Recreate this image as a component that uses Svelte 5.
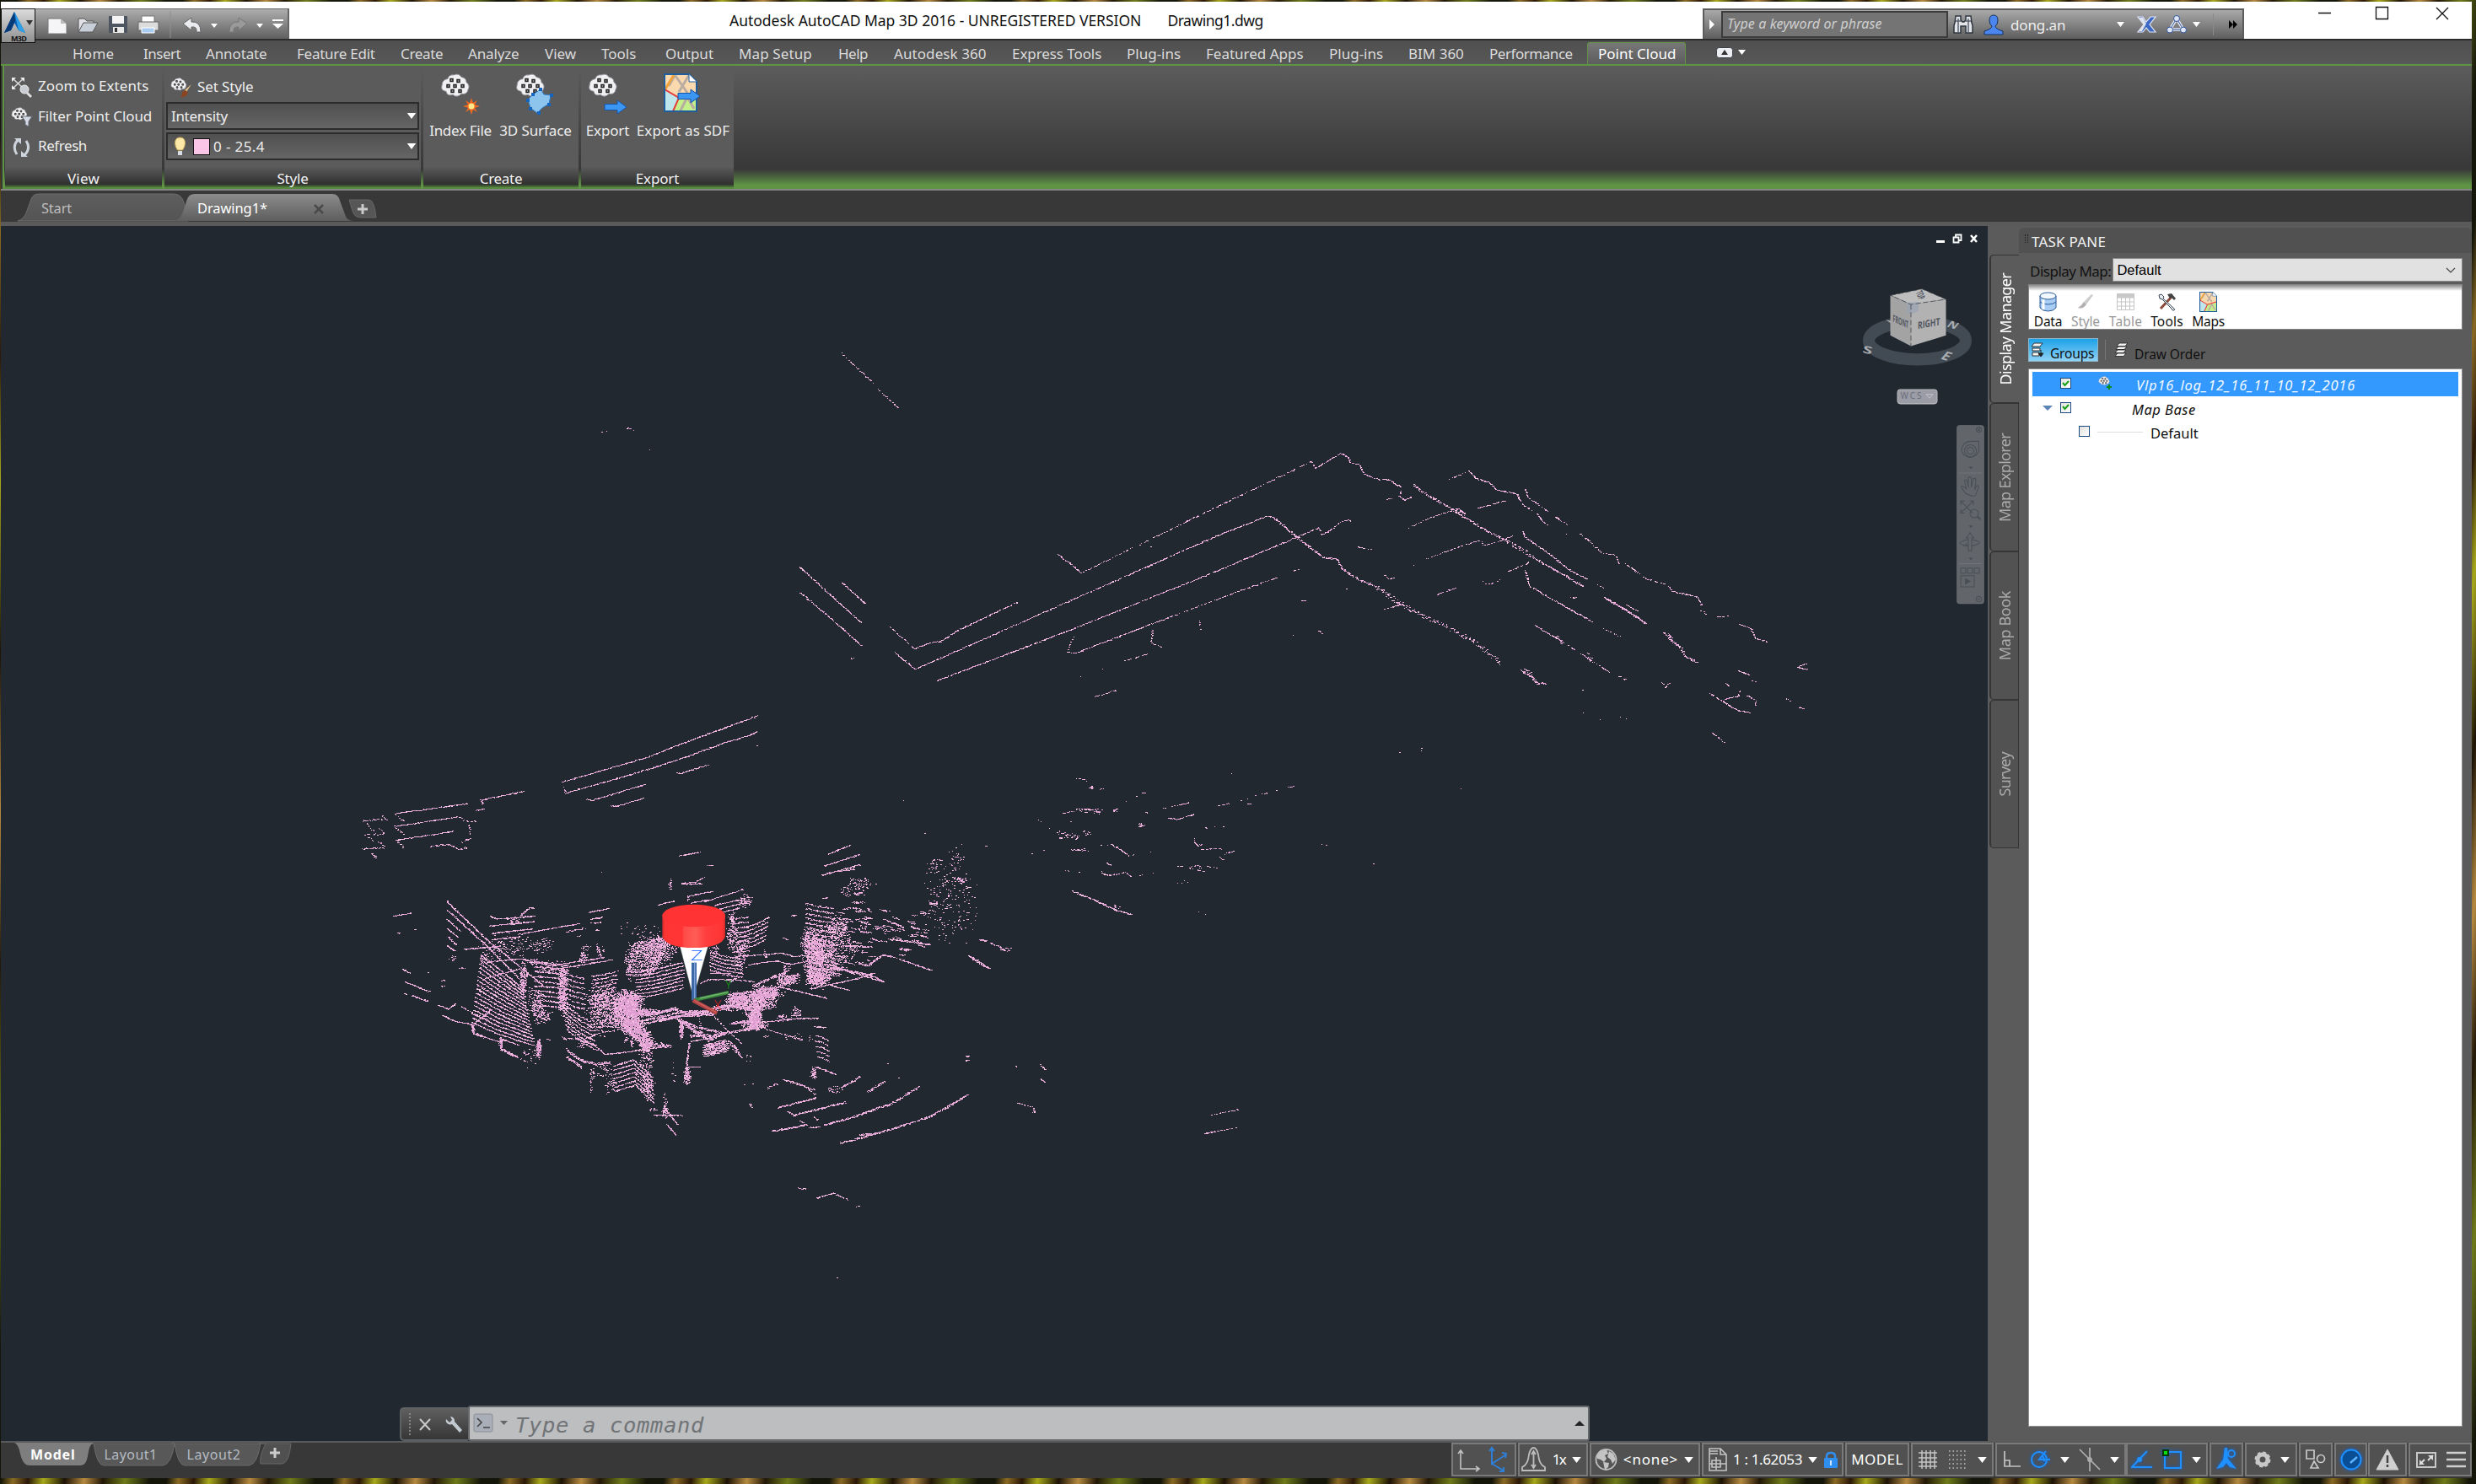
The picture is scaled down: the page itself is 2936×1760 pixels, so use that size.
<script>
  // Spreads a label over a known width by adjusting its tracking.
  function fit(node, width) {
    const vertical = getComputedStyle(node).writingMode.startsWith('vertical');
    const box = vertical ? node.offsetHeight : node.offsetWidth;
    node.style.letterSpacing = `${(width - box) / node.textContent.length}px`;
  }

  // Tab label, gap before it, width.
  const ribbonTabs = [
    ['Home', 0, 49], ['Insert', 35, 44], ['Annotate', 30, 73], ['Feature Edit', 35, 93], ['Create', 30, 50],
    ['Analyze', 30, 61], ['View', 30, 37], ['Tools', 30, 41], ['Output', 35, 57], ['Map Setup', 30, 87],
    ['Help', 31, 35], ['Autodesk 360', 31, 110], ['Express Tools', 30, 106], ['Plug-ins', 30, 64],
    ['Featured Apps', 30, 116], ['Plug-ins', 30, 64], ['BIM 360', 30, 66], ['Performance', 30, 99]
  ];
  const sideTabs = [['Display Manager', 132], ['Map Explorer', 105], ['Map Book', 82], ['Survey', 53]];

  // ---- Point cloud -------------------------------------------------------
  let seed = 20161210;
  function rnd() {
    seed = (seed + 0x6d2b79f5) | 0;
    let t = Math.imul(seed ^ (seed >>> 15), 1 | seed);
    t = (t + Math.imul(t ^ (t >>> 7), 61 | t)) ^ t;
    return ((t ^ (t >>> 14)) >>> 0) / 4294967296;
  }
  const shades = ['', '', ''];
  function put(x, y) {
    const w = rnd() < 0.45 ? 2 : 1;
    shades[Math.floor(rnd() * 3)] += `M${Math.round(x)} ${Math.round(y)}h${w}v1h-${w}z`;
  }
  // Local frames of the scan sections: origin and scale inside the viewport.
  const frames = {
    A: [399, 552, 0.574, 0.4464],
    B: [899, 112, 0.829, 0.3333],
    C: [459, 772, 0.3333, 0.3333],
    D: [779, 732, 0.3333, 0.3333],
    E: [1079, 592, 0.3333, 0.3333]
  };
  // Sections close to the scanner return more points per unit of length.
  const gain = { A: 1.15, B: 1.1, C: 1.35, D: 1.3, E: 1 };
  function line(f, density, jitter, pts, dx = 0, dy = 0) {
    const [ox, oy, sx, sy] = frames[f];
    const p = pts.split(' ').map((s) => s.split(',').map(Number));
    for (let i = 0; i < p.length; i++) {
      const a = p[i];
      const b = p[i + 1] ?? a;
      const x0 = ox + (a[0] + dx) * sx, y0 = oy + (a[1] + dy) * sy;
      const x1 = ox + (b[0] + dx) * sx, y1 = oy + (b[1] + dy) * sy;
      const n = Math.max(1, Math.round(Math.hypot(x1 - x0, y1 - y0) * gain[f]));
      if (b === a) { if (p.length === 1) put(x0, y0); continue; }
      for (let k = 0; k < n; k++) {
        for (let d = density; d > 0; d -= 1) {
          if (rnd() > d) continue;
          put(x0 + ((x1 - x0) * k) / n + (rnd() - 0.5) * jitter, y0 + ((y1 - y0) * k) / n + (rnd() - 0.5) * jitter);
        }
      }
    }
  }
  function lines(f, density, jitter, list) {
    for (const pts of list.split(';')) line(f, density, jitter, pts.trim());
  }
  function family(f, density, jitter, n, dx, dy, pts) {
    for (let i = 0; i < n; i++) line(f, density, jitter, pts, dx * i, dy * i);
  }
  // Soft-edged scatter of short returns.
  function blob(f, cx, cy, rx, ry, n) {
    const [ox, oy, sx, sy] = frames[f];
    for (let i = 0; i < n; i++) {
      const a = rnd() * 6.283, r = (rnd() + rnd() * 0.75) * 0.8;
      put(ox + (cx + Math.cos(a) * r * rx) * sx, oy + (cy + Math.sin(a) * r * ry) * sy);
    }
  }
  function dashes(f, cx, cy, rx, ry, n, len, slope = 0.15) {
    for (let i = 0; i < n; i++) {
      const x = cx + (rnd() * 2 - 1) * rx, y = cy + (rnd() * 2 - 1) * ry, l = len * (0.4 + rnd());
      line(f, 0.75, 1.4, `${x},${y} ${x + l},${y + l * slope}`);
    }
  }

  lines('B', 0.5, 0.8, '116,112 164,225;168,240 204,323;460,898 620,703 790,500;790,500 795,525 812,500 832,472;984,566 1015,535;1095,600 1100,630 1140,700 1180,770 1205,825 1225,835 1230,868;1238,865 1270,920 1300,940 1305,962;1345,1030 1358,1048;1370,1055 1387,1050;1195,935 1210,955;1207,1095 1232,1125;1150,1145 1187,1205 1217,1252;1230,1265 1243,1282;187,1090 205,1130 222,1168;440,1180 446,1140 451,1122;522,1210 560,1182;925,742 960,700 1000,668;1028,667 1067,640;893,1027 920,1007;970,973 1000,947;1035,925 1040,940 1060,922;893,905 900,918 908,915;773,1000 782,995;630,1070 630,1100;480,1338 512,1313;764,890 772,884;1240,1010 1257,1035;1362,1467 1382,1502;1178,1390 1181,1402;1160,985 1170,985;856,805 875,814;1358,1325 1375,1350;1420,1282 1432,1290;1468,1345 1475,1355;742,912 650,995 560,1080;820,740 830,718 842,708 847,715;800,1105 807,1115;1203,1420;764,1120;1232,1410;1240,1417;1177,1315;560,805;840,955;936,871;1155,760;460,1265;491,1238;915,1537;947,1521;131,1200;135,1200;131,1204;1100,860 1065,900');
  lines('B', 0.42, 0.8, '953,848 1000,805 1032,780 1035,800 1060,783 1080,762');
  lines('B', 0.85, 0.9, '427,832 445,865 460,898;832,472 842,485 845,505 858,513 865,545 885,565 903,566 908,580 918,592;918,605 915,625 922,637 933,628;897,636 906,632;1015,535 1025,562 1043,575 1055,603 1083,615 1090,650 1105,675;1112,685 1120,715 1130,730;1305,962 1342,983 1348,1015;1402,1080 1418,1095 1425,1130 1442,1143;1092,748 1095,770 1130,830 1160,890 1185,920;1208,985 1240,1030 1268,1078;1095,890 1098,915 1102,945 1130,985 1165,1035 1192,1072;1110,1085 1150,1145;57,875 147,1078;118,932 152,1008;58,967 100,1055 147,1158;222,1168 240,1148 260,1140 285,1100 370,1000;194,1180 210,1215 223,1240 450,990 650,770 728,693;255,1280 450,1095 650,895 800,737 805,762 820,740;440,1180 452,1183 560,1080;562,1103 560,1145 575,1162;1400,1245 1418,1262;1383,1290 1388,1303;1375,1350 1400,1388 1418,1394;1375,1350 1400,1335 1403,1315;1413,1335 1425,1350 1425,1372;1485,1232 1497,1220;1487,1235 1500,1242;1290,1285 1296,1303 1302,1290;1487,1375 1495,1382;1000,668 1010,690');
  lines('B', 1.3, 2, '936,584 950,612 993,675 1035,740 1070,785;1105,840 1140,890 1178,945;1293,1108 1303,1135 1318,1165 1325,1195 1342,1218;728,693 742,712 768,770 808,845 825,848 835,885 860,925 885,950;1090,1245 1105,1270 1112,1290 1125,1292;1300,1110 1306,1140;1208,985 1240,1030 1268,1078');
  lines('B', 1, 4.5, '1070,785 1105,840;885,950 915,1005 945,1045 980,1085 1020,1140 1045,1185 1060,1220;1140,1125 1150,1145;993,670 1010,690;1185,1185 1190,1210;1095,1240 1105,1265');

  lines('A', 1, 1, '464,240 640,174 700,143 790,100 868,64;470,270 600,222 700,182 800,135 850,116;850,116 868,105;515,285 525,289 635,246;565,303 578,304 633,282;700,215 710,216 767,194;118,324 268,297;295,288 387,264;285,316 305,310;297,288 300,300;118,358 250,332;120,394 240,371');
  lines('A', 0.65, 1.6, '250,332 268,345 293,345;268,345 275,380;190,411 230,406 250,420 265,415 255,398 277,390;50,343 100,338;92,328 102,345;55,380 100,378;52,417 100,415;118,358 137,380;120,395 137,415;70,430 82,443;60,350 75,372;85,362 95,376;62,385 75,395;85,400 100,412;118,324 137,345;466,255 472,270');
  lines('A', 1.7, 1.8, '910,1105 990,1078;942,1125 1050,1090;1005,1151 1060,1132 1130,1100 1140,1098 1202,1048;1095,1063 1133,1033;1040,1052 1080,1022;1037,1200 1080,1185 1150,1160 1220,1130 1260,1103 1304,1068;897,1168 970,1150;1078,1178 1120,1172');
  lines('A', 0.9, 1.2, '930,1115 945,1128;887,1053 910,1040;920,1030 985,1058;975,1158 998,1155;985,1130 996,1145;955,1140 965,1150;1436,1118 1442,1115;1452,992 1464,1006;1452,1028 1461,1040;1298,968 1304,970;1298,980 1304,980;850,1095 857,1105;950,1319 970,1321;988,1346 1025,1332 1055,1352;1070,1367 1078,1367;1400,995 1405,996;1437,1105 1440,1120');
  lines('A', 0.55, 1, '1403,1092 1440,1105;545,-691 560,-693;590,-700 608,-699;612,-694;645,-643 650,-640;1789,1174 1857,1158;1801,1125 1864,1109;1789,1174 1815,1168;865,143;1169,290;1212,377;1031,1557;545,480;1340,410;1290,405;2238,157;2320,257;2139,457');

  // Left wall and the rows behind it.
  lines('C', 1.2, 1, '208,86 345,218 555,390;210,118 345,240 490,385;208,150 258,193;210,183 248,215;212,212 245,243;208,243 238,265;363,140 385,149 520,138;362,173 520,158;370,200 512,183;463,203 680,165;270,257 400,245;370,222 470,212;470,135 505,107 522,112;715,125 787,110;720,150 760,142;18,138 85,127;60,373 140,405;85,422 142,442;50,327 80,343;178,455 215,470 240,447;190,490 230,510 300,525 302,555 400,588 402,612 440,632 460,640;300,525 370,468;400,575 465,597;345,360 470,325;570,330 700,310 800,293;360,300 470,290 580,315 770,285;670,575 735,600 770,630 830,625 920,612 1000,598;620,568 633,580;1040,515 1045,565;905,610 960,590;990,880 1025,918;945,847 1045,847;980,820 1030,880;1060,675 1110,675');
  lines('C', 0.6, 1.2, '1070,590 1062,670;33,199 43,199;92,186 98,187;720,165 760,160;720,192 750,186;630,195 705,180;670,210 690,208;190,367 205,367;190,388 203,388;57,412 70,417;142,340;260,460 300,485 360,510;720,690 720,770;250,323 275,323;640,575 700,572 760,552 810,545;140,405 152,405;560,577 575,577;740,240 758,285');
  lines('C', 1.8, 2.6, '880,490 950,485 1020,465;880,527 980,505 1060,490 1200,458;1020,500 1100,535 1200,555;885,515 1040,480 1130,475;632,612 690,655 740,665 790,660;635,640 690,678;1050,515 1140,580 1200,555;850,570 842,585;865,580 868,605;535,580 530,635;300,525 302,555 345,570;400,575 402,612 440,632 460,640');
  for (let i = 0; i < 17; i++) line('C', 1.2, 1, `${330 - i * 2},${277 + i * 15} ${400 - i},${332 + i * 14} ${482 + i * 2.4},${400 + i * 12.5}`);
  family('C', 1.1, 1.5, 10, 0, 17, '520,302 570,305 640,315');
  family('C', 0.9, 1.8, 7, 0, 18, '610,330 650,350 700,362');
  family('C', 0.95, 1.6, 9, -1, 14, '725,352 770,345 815,334');
  family('C', 1.1, 1.2, 8, 0, 13, '880,338 950,328 1050,303');
  family('C', 1, 1.4, 7, 4, 17, '612,440 640,465 680,495 720,515');
  family('C', 1.1, 1.2, 7, 1, 15, '800,672 872,650 905,680 940,715');
  family('C', 0.7, 2, 10, 0, 12, '720,430 770,420 820,425');
  family('C', 0.9, 1.5, 6, 0, 8, '1120,598 1200,580');
  family('C', 0.7, 2.4, 6, 0, 16, '500,390 530,410 556,425');
  blob('C', 480, 360, 10, 60, 170); blob('C', 620, 400, 14, 75, 280); blob('C', 530, 470, 16, 50, 80);
  blob('C', 535, 610, 8, 30, 110); blob('C', 445, 152, 18, 14, 30); blob('C', 545, 240, 45, 28, 60);
  blob('C', 692, 285, 12, 22, 60); blob('C', 705, 250, 14, 10, 20); blob('C', 755, 265, 12, 26, 16);
  blob('C', 430, 245, 85, 34, 120); blob('C', 345, 290, 22, 20, 40); blob('C', 525, 300, 30, 10, 40);
  dashes('C', 860, 430, 35, 12, 12, 24, -0.1);
  blob('C', 852, 445, 42, 36, 950); blob('C', 845, 492, 40, 42, 850); blob('C', 865, 530, 34, 26, 500);
  blob('C', 895, 558, 30, 22, 380); blob('C', 918, 590, 22, 26, 350);
  for (let i = 0; i < 13; i++) line('C', 1, 2.4, `${870 - i * 2},${238 + i * 9} ${930},${228 + i * 10} ${1005 - i * 4},${212 + i * 9}`);
  blob('C', 955, 255, 60, 48, 480); blob('C', 860, 300, 18, 55, 110); blob('C', 915, 482, 44, 12, 260);
  blob('C', 770, 470, 60, 75, 420); blob('C', 560, 495, 20, 20, 50); blob('C', 230, 287, 12, 10, 14);
  blob('C', 500, 640, 30, 32, 30); blob('C', 915, 640, 22, 36, 80); blob('C', 925, 730, 20, 55, 90);
  blob('C', 760, 690, 40, 22, 40); blob('C', 790, 740, 16, 30, 35); blob('C', 985, 835, 12, 20, 50);
  blob('C', 1062, 705, 10, 30, 60); blob('C', 985, 800, 8, 28, 20); blob('C', 942, 828, 12, 6, 12);
  blob('C', 1042, 540, 6, 30, 90); blob('C', 975, 600, 24, 10, 50); blob('C', 590, 320, 60, 20, 60);
  blob('C', 400, 590, 6, 22, 30); blob('C', 1015, 690, 6, 34, 8); blob('C', 890, 190, 90, 30, 22);
  blob('C', 1002, 22, 6, 16, 8); blob('C', 725, 720, 6, 60, 16); blob('C', 690, 600, 20, 14, 14);

  // Street furniture and facades right of the scanner.
  lines('D', 1.1, 1, '75,44 150,30;82,142 130,138 165,120;90,145 158,143;105,188 195,170;105,188 106,205;115,212 175,200;165,207 305,162;0,218 57,205;200,220 290,200;210,235 335,203;230,245 290,228;185,462 260,462;310,400 380,395 440,390 480,402 520,398;320,432 380,422 420,418 470,430 525,420;150,497 180,484 270,484 340,492;590,80 720,38;605,38 685,5;582,113 720,75;600,105 700,90;600,430 700,460 800,493;430,510 600,550;600,500 685,525;540,518 710,480 770,460;1105,398 1180,445;260,640 400,633 500,622 570,622;110,710 100,790;115,705 190,690;555,652 597,655;560,795 635,822;550,800 560,835;650,445 700,465;445,335 460,342;585,195 607,192');
  lines('D', 1.6, 1.5, '860,412 975,453;805,270 875,300;820,340 900,350 970,360;700,455 770,475 800,493;600,440 690,455;600,362 700,365 760,368;1145,343 1165,347;750,430 800,395 840,405');
  lines('D', 0.6, 1.3, '475,258 495,254;175,80 195,77;370,655 430,675 520,700;445,838 520,862 560,895;1180,355 1198,357;245,500 275,480;1093,758 1106,758;1093,771 1106,771;195,610 240,660 300,715;145,610 155,680;817,782;856,835;305,858;337,856;1165,10');
  lines('D', 2.2, 3, '0,603 60,588 100,605 200,602;0,630 80,612 200,608;115,685 200,682 280,668 350,655;75,630 130,670 160,672;250,540 330,528 430,510 500,462;340,505 400,480 460,455;255,550 420,535;250,575 330,590;260,640 360,625;310,600 350,655');
  family('D', 1.2, 1.2, 5, 0, 8, '163,718 210,712 252,702');
  family('D', 0.8, 1, 4, 4, 9, '252,702 285,735');
  family('D', 1.1, 1.1, 6, -3, 16, '300,300 350,285 395,262');
  family('D', 0.9, 1.8, 9, 0, 17, '265,268 290,265 325,262');
  family('D', 1, 1.5, 6, 0, 13, '185,385 230,400 300,412');
  family('D', 1, 1.8, 15, 0, 17, '525,215 570,224 625,232');
  family('D', 0.9, 1.2, 5, 2, 19, '558,683 580,688 605,702');
  blob('D', 262, 310, 18, 60, 170); blob('D', 292, 400, 18, 60, 110); blob('D', 305, 205, 22, 22, 70);
  blob('D', 200, 380, 16, 30, 40); blob('D', 330, 565, 72, 28, 950); blob('D', 385, 532, 48, 22, 460);
  blob('D', 460, 485, 34, 18, 200); blob('D', 345, 615, 22, 38, 450); blob('D', 345, 645, 40, 14, 220);
  blob('D', 280, 555, 30, 26, 240); blob('D', 235, 585, 35, 10, 130);
  blob('D', 560, 430, 36, 80, 850); blob('D', 530, 345, 20, 40, 150); blob('D', 575, 480, 30, 22, 220);
  blob('D', 560, 350, 40, 40, 180); blob('D', 640, 300, 34, 36, 220); blob('D', 720, 145, 40, 22, 70);
  blob('D', 670, 170, 16, 18, 24); blob('D', 715, 178, 20, 6, 36); blob('D', 715, 210, 22, 5, 24);
  blob('D', 610, 370, 70, 70, 240); blob('D', 82, 665, 4, 26, 80); blob('D', 103, 825, 11, 28, 80);
  blob('D', 490, 600, 16, 16, 50); blob('D', 445, 620, 26, 10, 40); blob('D', 552, 818, 10, 18, 40);
  blob('D', 625, 878, 22, 12, 24); blob('D', 1060, 60, 30, 34, 22); blob('D', 990, 75, 30, 28, 26);
  blob('D', 1075, 130, 18, 10, 34); blob('D', 1060, 200, 60, 130, 120); blob('D', 1000, 240, 50, 90, 60);
  blob('D', 1000, 130, 40, 60, 20); blob('D', 985, 215, 10, 7, 14); blob('D', 455, 445, 14, 14, 24);
  blob('D', 380, 395, 10, 16, 20); blob('D', 510, 690, 60, 12, 18); blob('D', 320, 765, 14, 14, 6);
  blob('D', 385, 687, 12, 4, 8); blob('D', 650, 400, 70, 60, 80); blob('D', 42, 150, 8, 18, 10);
  dashes('D', 720, 270, 90, 45, 30, 26); dashes('D', 830, 320, 120, 60, 26, 26, 0.25);
  dashes('D', 930, 270, 40, 60, 12, 18, 0); dashes('D', 690, 380, 80, 60, 24, 26);
  dashes('D', 570, 430, 45, 70, 30, 30); dashes('D', 880, 390, 50, 20, 4, 12);

  lines('E', 0.75, 1.2, '588,190 618,190;625,197;673,226 686,224;635,222 650,223;540,312 580,305;595,297 640,300 675,308;718,306 733,295;822,241 833,238;802,253 802,257;833,308 845,312;806,362 835,352;670,517 700,535 765,523 785,538;897,294 910,292;928,288 990,274;910,329 945,334 1008,316;1092,287 1133,277;1172,267;1198,262;1198,278 1210,281;1225,250;1250,243 1272,241;1298,232;1342,220 1370,216;1048,363 1055,364;1081,361;1111,361;1008,405 1008,415 1020,428 1037,420;1116,457 1155,445;1096,470 1111,481;948,501 970,503;948,562;964,561;973,553;985,558;1024,662;1046,672;1462,424;1477,427;1141,172;697,490 713,498;860,526;523,403 540,398;575,385 590,405;675,425;700,425;787,462 800,460;850,451 857,451;454,337;463,343;492,367;472,445;430,457;568,343;765,270');
  lines('E', 0.45, 1.2, '1030,441 1110,439;988,508 1045,520;1000,502 1018,495;1050,500 1092,508;547,514 565,520;583,522 600,520;811,532 826,529;570,442 635,444;620,385 647,388;528,378 560,400');
  lines('E', 1.5, 1.3, '712,423 740,440 776,464;595,598 660,625 730,658 785,673;244,762 270,766;284,776 310,785 335,802;209,825 245,848 280,866;573,590 595,598;700,492 712,498;0,715 30,728');
  blob('E', 612, 300, 22, 8, 14); blob('E', 660, 303, 16, 10, 12); blob('E', 545, 390, 24, 14, 12);
  blob('E', 584, 395, 12, 12, 8); blob('E', 595, 442, 22, 6, 10); blob('E', 640, 221, 6, 6, 10);
  blob('E', 815, 352, 8, 8, 8); blob('E', 1010, 510, 26, 12, 8); blob('E', 728, 648, 12, 10, 8);
  blob('E', 335, 798, 20, 8, 14); blob('E', 625, 378, 14, 12, 5); blob('E', 724, 302, 8, 8, 6);

  const shadeColors = ['#fcc8e8', '#f4b8e0', '#dc9ccf'];
</script>

{#snippet caret(dark = false)}
  <svg class="caret" class:dark width="9" height="6" viewBox="0 0 9 6"><path d="M0 0h9L4.500 6z" /></svg>
{/snippet}

{#snippet cloud(size)}
  <svg width={size} height={size * 0.8} viewBox="0 0 36 28">
    <path d="M9 6Q10 1 16 1.500Q22-1 25 4Q31 5 31 10Q36 14 33 19Q32 25 25 24Q20 29 15 25Q8 27 7 21Q0 20 2 14Q2 7 9 6z" fill="#f1f1f3" stroke="#8b8f96" />
    <g fill="#aaa" stroke="#222" stroke-width="1.500"><path d="M12 6h3v3h-3zM20 7h3v3h-3zM8 13h3v3H8zM16 13h3v3h-3zM25 13h3v3h-3zM13 19h3v3h-3zM22 19h3v3h-3z" /></g>
  </svg>
{/snippet}

{#snippet arrow()}
  <svg width="28" height="18" viewBox="0 0 28 18"><path d="M1 5.500h15V1l11 8-11 8v-4.500H1z" fill="#3c96f4" stroke="#1455a8" /></svg>
{/snippet}

{#snippet mapIcon(w, h)}
  <svg width={w} height={h} viewBox="0 0 40 46" preserveAspectRatio="none">
    <path d="M1 1h29l9 9v35H1z" fill="#fbd9ae" />
    <path d="M1 20l16 9-5 16H1z" fill="#bfe6ea" /><path d="M18 28l21-3v20H12z" fill="#c4f08c" />
    <path d="M14 1l-8 14M14 3l14 20M30 2L18 22M20 44l8-16 8 14" stroke="#b9ada2" stroke-width="3" fill="none" />
    <path d="M12 2L1 20" stroke="#f2a33a" stroke-width="3" /><path d="M1 19l17 10-7 16M18 29l20-6" stroke="#e43b3b" stroke-width="2" fill="none" />
    <path d="M1 1h29l9 9v35H1z" fill="none" stroke="#1f5d9c" stroke-width="2" /><path d="M30 1v9h9" fill="#fff" stroke="#1f5d9c" />
  </svg>
{/snippet}

<div class="desktop">
  <div class="window">
    <header class="titlebar">
      <div class="quick">
        <div class="appbtn">
          <svg width="38" height="27" viewBox="0 0 38 27"><path d="M15 0L3 25l8-3 4-9 5 9 8 3z" fill="#0c5fb0" /><path d="M15 0L3 25l8-3 5-11z" fill="#063a78" /><path d="M15 0l5 22 8 3z" fill="#2fa0e8" /><path d="M29 10h8l-4 6z" fill="#333" /></svg>
          <b use:fit={18}>M3D</b>
        </div>
        <svg class="tools" width="300" height="36" viewBox="42 10 300 36">
          <path d="M57 21h15l7 6v12H57z" fill="#f5f5f7" stroke="#777" /><path d="M72 21v6h7" fill="#bbb" />
          <path d="M93 36V21h7l3 3h8v4" fill="#dfe1e6" stroke="#555" /><path d="M93 37l6-11h17l-6 11z" fill="#c9cfd9" stroke="#555" />
          <path d="M129 18h22v20h-22z" fill="#4d5561" /><path d="M133 18h14v9h-14z" fill="#f4f4f4" /><path d="M134 31h13v7h-13z" fill="#e8e8e8" /><path d="M136 32h3v5h-3z" fill="#333" />
          <path d="M168 18h15v8h-15z" fill="#fff" stroke="#777" /><path d="M164 25h24v10h-24z" fill="#dcdcdc" stroke="#666" /><path d="M168 32h15v6h-15z" fill="#a9cdf2" stroke="#fff" />
          <path d="M202 12v32" stroke="#8f8f8f" />
          <path d="M217 27l10-7v5q11-1 11 12h-5q1-7-6-6v4z" fill="#e9ebee" stroke="#666" /><path d="M250 27h8l-4 5z" fill="#fff" />
          <path d="M293 27l-10-7v5q-11-1-11 12h5q-1-7 6-6v4z" fill="#9a9a9a" stroke="#777" /><path d="M304 27h8l-4 5z" fill="#fff" />
          <path d="M323 22h13v2h-13zM323 27h13l-6.500 6z" fill="#fff" />
        </svg>
      </div>
      <h1><span use:fit={488}>Autodesk AutoCAD Map 3D 2016 - UNREGISTERED VERSION</span><span use:fit={113}>Drawing1.dwg</span></h1>
      <div class="info">
        <svg width="20" height="30" viewBox="0 0 20 30"><path d="M6 9l6 6-6 6z" fill="#fff" /></svg>
        <div class="search"><span use:fit={184}>Type a keyword or phrase</span></div>
        <svg class="bino" width="24" height="24" viewBox="0 0 24 24"><path d="M3 2h6v5l2 2h2l2-2V2h6l1 8 1 3v9h-8v-8h-6v8H1v-9l1-3z" fill="#e2e4e8" stroke="#2e3640" stroke-width="1.500" /><path d="M6 5v16M18 5v16M3 8h6M15 8h6" stroke="#59616d" stroke-width="1.500" /></svg>
        <svg class="user" width="24" height="25" viewBox="0 0 24 25"><path d="M12 1q5 0 5 6 0 5-3 7 0 3 9 6v4H1v-4q9-3 9-6-3-2-3-7 0-6 5-6z" fill="#4b86ee" stroke="#16305e" /></svg>
        <span class="name" use:fit={65}>dong.an</span>
        {@render caret()}
        <svg class="ex" width="25" height="22" viewBox="0 0 25 22"><path d="M2 2h6l4 6 5-6h6l-7 9 7 9h-7l-4-5-4 5H2l7-9z" fill="#3c67c4" stroke="#dfe6f5" stroke-width="1.200" /><path d="M3 3h5l4 7-5 9H3l6-8z" fill="#dfe4ee" /></svg>
        <svg class="a360" width="26" height="24" viewBox="0 0 26 24"><path d="M13 5L5 18h16z" fill="none" stroke="#e6ebf6" stroke-width="3.500" /><path d="M13 5L5 18h16z" fill="none" stroke="#34549c" stroke-width="1" /><g fill="#dfe6f5" stroke="#34549c"><circle cx="13" cy="5" r="3.500" /><circle cx="5" cy="18.500" r="3.500" /><circle cx="21" cy="18.500" r="3.500" /></g></svg>
        {@render caret()}
        <i class="sep"></i>
        <svg class="more" width="12" height="10" viewBox="0 0 12 10"><path d="M1 0l5 5-5 5zM6 0l5 5-5 5z" /></svg>
      </div>
      <svg class="winbtns" width="170" height="24" viewBox="0 0 170 24" fill="none" stroke="#111" stroke-width="1.300"><path d="M1 11.500h15M69.500 4.500h14v14h-14zM141 5l14 14M155 5l-14 14" /></svg>
    </header>

    <nav class="ribbontabs">
      {#each ribbonTabs as [name, gap, w]}
        <span class="rt" style:width="{w}px" style:margin-left="{gap}px"><span use:fit={w}>{name}</span></span>
      {/each}
      <span class="rt active"><span use:fit={92}>Point Cloud</span></span>
      <svg class="toggle" width="20" height="13" viewBox="0 0 20 13"><rect x=".5" y=".5" width="19" height="12" rx="3" fill="#eceef2" stroke="#3c414a" /><path d="M10 3l4 6H6z" fill="#333" /></svg>
      {@render caret()}
    </nav>

    <section class="ribbon">
      <div class="panel p-view">
        <div class="body rows">
          <div class="cmd"><svg width="26" height="26" viewBox="0 0 26 26"><path d="M2 2l13 12M15 2L2 14" stroke="#ddd" stroke-width="1.500" /><path d="M1 1h5L1 6zM16 1v5l-5-5zM1 15v-5l5 5z" fill="#eee" /><circle cx="16" cy="15" r="5" fill="#c9cdd3" stroke="#eee" /><path d="M19 19l5 5" stroke="#ddd" stroke-width="3" /></svg><span use:fit={131}>Zoom to Extents</span></div>
          <div class="cmd"><span class="pair">{@render cloud(20)}<svg width="14" height="14" viewBox="0 0 14 14"><path d="M1 1h12L9 7v6l-4-2V7z" fill="#d5dbe4" stroke="#667" /></svg></span><span use:fit={135}>Filter Point Cloud</span></div>
          <div class="cmd"><svg width="26" height="26" viewBox="0 0 26 26" fill="none" stroke="#cfd5dd" stroke-width="3"><path d="M8 4Q1 12 7 21M16 22q8-8 2-17" /><path d="M4 2h8v7zM20 24h-8v-7z" fill="#cfd5dd" stroke="none" /></svg><span use:fit={58}>Refresh</span></div>
        </div>
        <footer><span use:fit={38}>View</span></footer>
      </div>
      <div class="panel p-style">
        <div class="body rows">
          <div class="cmd st"><span class="pair">{@render cloud(20)}<svg width="15" height="16" viewBox="0 0 15 16"><path d="M14 0l-6 9-2-2z" fill="#e8c68a" /><path d="M7 7l3 3q-2 6-9 5 3-3 2-6z" fill="#8a4520" /></svg></span><span use:fit={67}>Set Style</span></div>
          <div class="combo"><span use:fit={67}>Intensity</span>{@render caret()}</div>
          <div class="combo"><svg class="bulb" width="15" height="24" viewBox="0 0 15 24"><path d="M7.500 1q6 0 6 7 0 4-3 8h-6q-3-4-3-8 0-7 6-7z" fill="#ffe9a8" stroke="#c4a75a" /><path d="M5 17h5v5H5z" fill="#d8dde4" /></svg><i class="swatch"></i><span use:fit={61}>0 - 25.4</span>{@render caret()}</div>
        </div>
        <footer><span use:fit={37}>Style</span></footer>
      </div>
      <div class="panel p-create">
        <div class="body big">
          <div class="tool w1"><div class="pic">{@render cloud(36)}<svg class="low" width="20" height="20" viewBox="0 0 20 20"><path d="M10 0l2 6 5-3-3 5 6 2-6 2 3 5-5-3-2 6-2-6-5 3 3-5-6-2 6-2-3-5 5 3z" fill="#f0681e" /><circle cx="10" cy="10" r="3.500" fill="#ffe98a" /></svg></div><span use:fit={74}>Index File</span></div>
          <div class="tool w2"><div class="pic">{@render cloud(36)}<svg class="low" width="36" height="32" viewBox="0 0 36 32"><path d="M10 8l9-6 4 6 8 1-2 10-8 5-6 6-8-6-3-10z" fill="#8cc4ee" stroke="#2f7fca" /><g fill="#1565c0"><path d="M8 6h4v4H8zM17 0h4v4h-4zM30 7h4v4h-4zM2 13h4v4H2zM27 18h4v4h-4zM5 23h4v4H5zM15 28h4v4h-4z" /></g></svg></div><span use:fit={86}>3D Surface</span></div>
        </div>
        <footer><span use:fit={50}>Create</span></footer>
      </div>
      <div class="panel p-export">
        <div class="body big">
          <div class="tool w3"><div class="pic">{@render cloud(36)}<div class="low">{@render arrow()}</div></div><span use:fit={51}>Export</span></div>
          <div class="tool w4"><div class="pic sdf">{@render mapIcon(40, 46)}<div class="low">{@render arrow()}</div></div><span use:fit={110}>Export as SDF</span></div>
        </div>
        <footer><span use:fit={51}>Export</span></footer>
      </div>
    </section>

    <div class="files">
      <svg class="fileshape" width="460" height="37" viewBox="0 0 460 37">
        <defs><linearGradient id="ft" x2="0" y2="1"><stop offset="0" stop-color="#5e5e5e" /><stop offset="1" stop-color="#545454" /></linearGradient><linearGradient id="fa" x2="0" y2="1"><stop offset="0" stop-color="#8c8c8c" /><stop offset="1" stop-color="#5e5e5e" /></linearGradient></defs>
        <path d="M20 36Q28 34 31 24L36 10Q38 4 45 4H205Q214 4 217 14L222 36z" fill="url(#ft)" stroke="#6c6c6c" />
        <path d="M206 36Q214 34 217 22L221 10Q223 4 230 4H393Q400 4 402 12L408 28Q410 36 418 36z" fill="url(#fa)" />
        <path d="M413 11h24q6 1 8 21h-18q-8 0-10-8z" fill="#565656" stroke="#666" />
        <path d="M423 22h12M429 16v12" stroke="#c9c9c9" stroke-width="3" /><path d="M372 17l10 10M382 17l-10 10" stroke="#4a4a4a" stroke-width="2.500" />
      </svg>
      <span class="f1" use:fit={36}>Start</span><span class="f2" use:fit={83}>Drawing1*</span>
    </div>

    <main>
      <div class="view">
        <svg class="scan" width="2356" height="1441" viewBox="0 0 2356 1441" shape-rendering="crispEdges">
          {#each shades as d, i}<path {d} fill={shadeColors[i]} />{/each}
        </svg>
        <svg class="pin" width="100" height="140" viewBox="0 200 300 420">
          <defs><linearGradient id="red"><stop offset="0" stop-color="#c92a2a" /><stop offset=".04" stop-color="#ff3434" /><stop offset=".32" stop-color="#ff3535" /><stop offset=".34" stop-color="#ff4a48" /><stop offset=".53" stop-color="#ff5c55" /><stop offset=".7" stop-color="#ff3d3d" /><stop offset=".96" stop-color="#ff3434" /><stop offset="1" stop-color="#c92a2a" /></linearGradient></defs>
          <path d="M75 350h108L131 530h-9z" fill="#fff" stroke="#bfc2b4" />
          <path d="M16 256v75Q30 371 128 371T240 331V256z" fill="url(#red)" /><ellipse cx="128" cy="257" rx="112" ry="40" fill="#ff3333" />
          <text class="axis z" x="116" y="416" textLength="44" lengthAdjust="spacingAndGlyphs">Z</text>
          <path d="M129 424v134" stroke="#3d68a8" stroke-width="18" /><path d="M131 424v134" stroke="#7ea2d6" stroke-width="4" />
          <path d="M130 557l122-27" stroke="#3b8a3b" stroke-width="13" /><path d="M150 551l100-22" stroke="#76b776" stroke-width="4" />
          <path d="M125 558l86 46" stroke="#b04444" stroke-width="14" /><path d="M130 559l78 42" stroke="#cf6260" stroke-width="4" />
          <text class="axis y" x="240" y="517">Y</text><text class="axis x" x="200" y="592">X</text>
        </svg>
        <svg class="vpbtns" width="54" height="14" viewBox="0 0 54 14"><path d="M2 9h10v3H2z" fill="#fff" /><path d="M22.500 5.500h6v6h-6zM25 5V2.500h6.500V9H29" fill="none" stroke="#fff" stroke-width="1.800" /><path d="M43 3l7 8M50 3l-7 8" stroke="#fff" stroke-width="2.500" /></svg>
        <svg class="cube" width="150" height="153" viewBox="100 160 300 300" preserveAspectRatio="none">
          <ellipse cx="247" cy="301" rx="115" ry="44" fill="none" stroke="#424b54" stroke-width="28" />
          <g class="compass"><text transform="translate(116 328) rotate(14) scale(1.500 .85)">S</text><text transform="translate(300 343) skewX(-32) rotate(14) scale(1.400 .9)">E</text><text transform="translate(315 268) skewX(-30) rotate(15) scale(1.200 .7)">N</text></g>
          <path d="M172 252l14 4v6z" fill="#b5b5b5" />
          <path d="M184 196l74-15 57 24-83 12z" fill="#bdbdbd" /><path d="M183 196l49 21v97l-49-25z" fill="#a3a3a4" /><path d="M232 217l83-12v84l-83 25z" fill="#b2b2b3" />
          <path d="M222 213l28-2v22l-18 6-10-5z" fill="#98a3b5" opacity=".6" />
          <path d="M184 196l74-15 57 24-83 12zM232 217v97" fill="none" stroke="#3d434a" stroke-width="1.500" stroke-dasharray="12 6" />
          <g class="faces"><text transform="translate(189 257) skewY(23)" textLength="37" lengthAdjust="spacingAndGlyphs">FRONT</text><text transform="translate(248 274) skewY(-10)" textLength="53" lengthAdjust="spacingAndGlyphs">RIGHT</text><text transform="translate(243 190) rotate(65) scale(.6 1)" textLength="32" lengthAdjust="spacingAndGlyphs">TOP</text></g>
          <rect x="200" y="415" width="94" height="33" rx="7" fill="#9c9ca6" stroke="#b9b9c0" stroke-width="2" /><text class="wcs" x="207" y="436" textLength="50">WCS</text><path d="M268 426h16l-8 9z" fill="none" stroke="#d0d0d8" stroke-width="1.500" />
        </svg>
        <svg class="navbar" width="33" height="214" viewBox="340 495 66 420" preserveAspectRatio="none">
          <rect x="341" y="498" width="64" height="415" rx="6" fill="#62666a" stroke="#777b80" />
          <g fill="none" stroke="#4a4e55" stroke-width="2">
            <circle cx="393" cy="508" r="6" /><path d="M390 505l6 6M396 505l-6 6" /><path d="M352 556a21 21 0 0 1 21-21h20v21a21 21 0 0 1-41 0z" /><circle cx="373" cy="557" r="14" /><circle cx="373" cy="557" r="8" />
            <path d="M345 609h55M345 820h55" stroke="#70747a" />
            <path d="M360 655l-9-14q2-5 9 2l3 3-4-20q4-4 7 4l2 12v-22q4-5 7 0v22l5-20q6-3 6 3l-3 22 5-9q6 0 4 5l-7 18q-8 4-25-6z" />
            <path d="M350 674l28 28M380 674l-30 28M350 684v-10h10M371 674h9v9M350 693v9h9" /><circle cx="382" cy="703" r="10" /><path d="M389 710l8 7" stroke-width="4" />
            <path d="M368 790v-30h-5l9-12 9 12h-5v30zM366 764q-36 8 0 14M378 764q34 8-2 14M356 778h10l-4-6" />
            <path d="M350 830h12v12h-12zM366 830h12v12h-12zM382 830h12v12h-12zM350 848h32v26h-32z" /><circle cx="393" cy="902" r="6" /><path d="M390 902h6" />
          </g>
          <path d="M369 594h10l-5 6zM369 731h10l-5 6zM369 806h10l-5 6zM360 853l14 8-14 8z" fill="#4a4e55" />
        </svg>
        <div class="command">
          <div class="grip"><svg width="80" height="38" viewBox="0 0 80 38"><path d="M10 5v26" stroke="#999" stroke-width="1.500" stroke-dasharray="2 2" /><path d="M22 12l12 13M34 12L22 25" stroke="#ccc" stroke-width="2" /><path d="M53 12a5 5 0 0 0 7 6l9 10 3-3-9-10a5 5 0 0 0-5-6l2 4-3 3z" fill="#c3c9d1" /></svg></div>
          <div class="entry">
            <svg width="42" height="24" viewBox="0 0 42 24"><rect x="1" y="1" width="22" height="21" rx="2" fill="#a9afb8" stroke="#8a8f96" /><path d="M5 6l5 5-5 5M12 17h8" fill="none" stroke="#444" stroke-width="1.600" /><path d="M32 9h9l-4.500 5z" fill="#666" /></svg>
            <span use:fit={224}>Type a command</span>
            <svg class="up" width="12" height="6" viewBox="0 0 12 6"><path d="M0 6h12L6 0z" fill="#222" /></svg>
          </div>
        </div>
      </div>

      <aside>
        <div class="sidetabs">
          {#each sideTabs as [name, w], i}<div class="side" class:on={i === 0}><span use:fit={w}>{name}</span></div>{/each}
        </div>
        <div class="pane">
          <div class="pt"><i></i><span use:fit={88}>TASK PANE</span></div>
          <div class="dm"><span use:fit={96}>Display Map:</span><div class="select"><span use:fit={52}>Default</span><svg width="12" height="7" viewBox="0 0 12 7"><path d="M1 1l5 5 5-5" fill="none" stroke="#444" stroke-width="1.200" /></svg></div></div>
          <div class="tb">
            <div class="ti t1"><svg width="21" height="24" viewBox="0 0 21 24"><path d="M1 5v14q3 4 9.500 4t9.500-4V5z" fill="#a9cdf5" stroke="#2b5b94" /><ellipse cx="10.500" cy="5" rx="9.500" ry="4" fill="#f2f8ff" stroke="#2b5b94" /><path d="M1 12q3 3 9.500 3t9.500-3" fill="none" stroke="#2b5b94" /><path d="M5 9v12" stroke="#fff" stroke-width="3" /></svg><span use:fit={33}>Data</span></div>
            <div class="ti t2 off"><svg width="20" height="24" viewBox="0 0 20 24"><path d="M19 4l-2-1-9 9 3 3z" fill="#ccc" /><path d="M8 12l3 3q-4 6-10 4 4-2 7-7z" fill="#b5b0b0" /></svg><span use:fit={34}>Style</span></div>
            <div class="ti t3 off"><svg width="22" height="24" viewBox="0 0 22 24" fill="none" stroke="#c5c5c5"><path d="M.5 2.500h20v19H.5zM.5 12h20M.5 17h20M5.500 7v15M10.500 7v15M15.500 7v15" /><path d="M1 3h19v4H1z" fill="#c9c9c9" /></svg><span use:fit={39}>Table</span></div>
            <div class="ti t4"><svg width="22" height="24" viewBox="0 0 22 24"><path d="M3 20L16 6" stroke="#8a4a3c" stroke-width="3" /><path d="M11 3l5-1 5 6-2 2-3-3-2 1z" fill="#444" /><path d="M1 4l3-1 3 3-1 2 12 11q3 2 1 3t-3-2L5 9 2 8z" fill="#e8edf2" stroke="#3a4654" /></svg><span use:fit={39}>Tools</span></div>
            <div class="ti t5">{@render mapIcon(21, 24)}<span use:fit={39}>Maps</span></div>
          </div>
          <div class="modes">
            <div class="groups"><svg width="17" height="18" viewBox="0 0 17 18"><path d="M5 1h10l-3 4H2zM3 7h9v3H3zM3 12h8v4H3z" fill="#f4f4f4" stroke="#333" /><path d="M13 9v6M10 13l3 4 3-4z" fill="#222" stroke="#222" /></svg><span use:fit={52}>Groups</span></div>
            <i></i>
            <svg class="order" width="16" height="18" viewBox="0 0 16 18" fill="#f2f2f2" stroke="#222" stroke-width=".8"><path d="M4 13h10l-3 3.500H1zM4 9h10l-3 3.500H1zM5 5h10l-3 3.500H2zM6 1h10l-3 3.500H3z" /></svg><span use:fit={84}>Draw Order</span>
          </div>
          <div class="tree">
            <div class="row sel"><i class="cb"></i><svg class="check" width="9" height="8" viewBox="0 0 9 8"><path d="M1 3l2.500 3L8 1" /></svg><span class="ic">{@render cloud(14)}<svg width="6" height="6" viewBox="0 0 6 6"><path d="M3 0v6M0 3h6" stroke="#0c8a1e" stroke-width="2" /></svg></span><em use:fit={260}>Vlp16_log_12_16_11_10_12_2016</em></div>
            <div class="row base"><svg class="tri" width="12" height="8" viewBox="0 0 12 8"><path d="M0 1h12L6 7z" fill="#5b86b5" /></svg><i class="cb"></i><svg class="check" width="9" height="8" viewBox="0 0 9 8"><path d="M1 3l2.500 3L8 1" /></svg><em use:fit={76}>Map Base</em></div>
            <div class="row def"><i class="cb"></i><b></b><span use:fit={57}>Default</span></div>
          </div>
        </div>
      </aside>
    </main>

    <div class="status">
      <div class="layouts">
        <svg class="shape" width="350" height="28" viewBox="0 0 350 28">
          <path d="M306 1h38q-2 22-10 24h-26q-2-8 6-24z" fill="#505050" stroke="#666" /><path d="M202 1h106q-4 25-14 26h-76q-8 0-12-26z" fill="#585858" stroke="#6a6a6a" /><path d="M106 1h100q-4 25-14 26h-70q-8 0-12-26z" fill="#585858" stroke="#6a6a6a" />
          <path d="M16 0h94q-5 1-7 16-2 11-8 11H34q-8 0-11-14-2-11-7-13z" fill="#7e7e7e" /><path d="M319 12h12M325 6v12" stroke="#ccc" stroke-width="3" />
        </svg>
        <b class="l1" use:fit={54}>Model</b><span class="l2" use:fit={63}>Layout1</span><span class="l3" use:fit={64}>Layout2</span>
      </div>
      <div class="boxes">
        <div class="sb b1"><svg width="76" height="36" viewBox="0 0 76 36" fill="none" stroke="#c4c4c4" stroke-width="1.600"><path d="M9 8v21h21M6 11l3-4 3 4M27 26l4 3-4 3" /><g stroke="#2f7fd6" stroke-width="2"><path d="M46 5v18l17-11M46 23l14 8M43 8l3-4 3 4M58 10l5 1-1 5M60 27v5h-5" /></g></svg></div>
        <div class="sb b2"><svg width="29" height="30" viewBox="0 0 29 30" fill="none" stroke="#bdbdbd" stroke-width="1.800"><path d="M1 28v-4q7-3 8-15 2-8 5.500-8t5.500 8q1 12 8 15v4zM14.500 6v18M12 9l2.500-4L17 9M12 21l2.500 4 2.500-4" /></svg><span use:fit={16}>1x</span>{@render caret()}</div>
        <div class="sb b3"><svg width="27" height="28" viewBox="0 0 27 28"><circle cx="13.500" cy="14" r="12" fill="#555" stroke="#bdbdbd" stroke-width="1.800" /><path d="M3 9l4-5 7-2 2 5-4 2 2 4-3 4-4-3-4-1zM17 4l5 3 3 7-4 5-2-5-4-3zM10 17l7 1-1 5-4 3z" fill="#c4c4c4" /></svg><span use:fit={65}>&lt;none&gt;</span>{@render caret()}</div>
        <div class="sb b4"><svg width="22" height="28" viewBox="0 0 22 28" fill="none" stroke="#c4c4c4" stroke-width="1.600"><path d="M1 1h13l7 7v19H1zM14 1v7h7M1 7h10M1 4h10M4 15h10v8H4zM9 11v15M1 19h20" /></svg><span use:fit={82}>1 : 1.62053</span>{@render caret()}<svg width="18" height="21" viewBox="0 0 18 21"><path d="M4 9V6q0-4 5-4t5 4v3" fill="none" stroke="#2f8ff0" stroke-width="2.500" /><rect x="1" y="8" width="16" height="12" rx="1" fill="#2f8ff0" /><path d="M9 11v6" stroke="#cfe6ff" stroke-width="2" /></svg></div>
        <div class="sb b5"><span use:fit={61}>MODEL</span></div>
        <div class="sb b6"><svg width="22" height="22" viewBox="0 0 22 22" stroke="#c4c4c4" stroke-width="1.500"><path d="M4 0v22M9 0v22M14 0v22M19 0v22M0 3h22M0 9h22M0 14h22M0 19h22" /></svg><svg width="21" height="22" viewBox="0 0 21 22" stroke="#c4c4c4" stroke-width="1.500" stroke-dasharray="1.500 3"><path d="M0 1h21M0 6h21M0 11h21M0 16h21M0 21h21" /></svg>{@render caret()}</div>
        <div class="sb b7"><svg width="20" height="20" viewBox="0 0 20 20" fill="none" stroke="#c4c4c4" stroke-width="1.700"><path d="M1 0v18h19M1 11h6v7" /></svg><svg class="glow" width="24" height="24" viewBox="0 0 24 24" fill="none" stroke="#1e90ff" stroke-width="2"><circle cx="11" cy="12" r="9" /><path d="M19 2l-8 10h13M15 8q2 2 2 6" /></svg>{@render caret()}<svg width="26" height="28" viewBox="0 0 26 28" stroke="#b0b0b0" stroke-width="1.700" fill="none"><path d="M1 2l24 24M13 0v28" /><circle cx="13" cy="14" r="2" /></svg>{@render caret()}</div>
        <div class="sb b8"><svg class="glow" width="25" height="22" viewBox="0 0 25 22" stroke="#1e90ff" stroke-width="2" fill="none"><path d="M19 1L1 20h24" /><circle cx="10" cy="11" r="2" fill="#1e90ff" /></svg><svg class="glow" width="23" height="24" viewBox="0 0 23 24" fill="none" stroke="#1e90ff" stroke-width="2"><path d="M3 3h19v19H3z" /><path d="M1 1h6v6H1z" fill="#0be00b" stroke="#023a02" /></svg>{@render caret()}</div>
        <div class="sb b9"><svg class="glow" width="26" height="28" viewBox="0 0 26 28" fill="#1e90ff"><path d="M11 0h3l1 13 10 12-8-2-4-5-4 5-8 2 8-11z" /><circle cx="19" cy="7" r="4" fill="none" stroke="#1e90ff" stroke-width="2" /></svg></div>
        <div class="sb b10"><svg width="20" height="20" viewBox="0 0 20 20"><circle cx="10" cy="10" r="6" fill="none" stroke="#c8c8c8" stroke-width="5" /><circle cx="10" cy="10" r="8" fill="none" stroke="#c8c8c8" stroke-width="3" stroke-dasharray="3.500 2.780" /></svg>{@render caret()}</div>
        <div class="sb b11"><svg width="24" height="24" viewBox="0 0 24 24" fill="none" stroke="#c8c8c8" stroke-width="1.700"><path d="M1 1h9v10H1zM6 22l4-8 5 8z" /><circle cx="18" cy="11" r="4.500" /></svg></div>
        <div class="sb b12"><svg class="glow" width="26" height="26" viewBox="0 0 26 26"><circle cx="13" cy="13" r="11.500" fill="#0a4f96" stroke="#1e90ff" stroke-width="2" /><path d="M12 17l8-7" stroke="#5cb3ff" stroke-width="2.500" /></svg></div>
        <div class="sb b13"><svg width="28" height="26" viewBox="0 0 28 26"><path d="M14 1l13 24H1z" fill="#cfcfcf" stroke="#cfcfcf" stroke-linejoin="round" /><path d="M14 8v9M14 19v3" stroke="#444" stroke-width="2.500" /></svg></div>
        <div class="sb b14"><svg width="24" height="19" viewBox="0 0 24 19"><path d="M1 1h22v17H1z" fill="none" stroke="#c8c8c8" stroke-width="2" /><path d="M20 4v6l-6-6zM4 15V9l6 6z" fill="#ddd" /><path d="M20 4l-6 6M4 15l6-6" stroke="#ddd" stroke-width="2" /></svg><svg width="23" height="20" viewBox="0 0 23 20" stroke="#cfcfcf" stroke-width="2.500"><path d="M0 2h23M0 10h23M0 18h23" /></svg></div>
      </div>
    </div>
  </div>
</div>

<style>
  :global(body) { margin: 0; overflow: hidden; }
  .desktop { box-sizing: border-box; width: 2936px; height: 1760px; padding: 2px 5px 7px 1px; font-family: 'Noto Sans', 'Open Sans', sans-serif; font-size: 17px; line-height: 24px; color: #eee;
    background: repeating-linear-gradient(97deg, #15160a 0 20px, #8a6a24 34px, #2a1708 52px, #a8a81c 70px, #1c1206 95px, #b58a40 118px, #221708 140px, #6e7a1a 166px, #15160a 195px); }
  .window { height: 1751px; width: 2930px; display: flex; flex-direction: column; background: #383838; overflow: hidden; }
  span, em, b { white-space: nowrap; }
  svg { flex: none; display: block; }
  .caret { fill: #fff; }

  .titlebar { height: 44px; flex: none; background: #fff; border-bottom: 2px solid #2b2b2b; display: flex; align-items: flex-end; position: relative; z-index: 2; }
  .quick { width: 342px; height: 36px; flex: none; display: flex; background: linear-gradient(#adadad, #606060); border: solid #666; border-width: 1px 2px 0 0; box-sizing: border-box; }
  .appbtn { width: 41px; height: 41px; margin-top: -1px; box-sizing: border-box; border: 1px solid #111; background: linear-gradient(#dcdcdc, #8f8f8f); flex: none; overflow: hidden; padding-top: 3px; }
  .appbtn b { font: 700 9px/9px 'Open Sans', sans-serif; color: #111; display: inline-block; margin-left: 11px; vertical-align: top; }
  h1 { margin: 0; padding-left: 522px; box-sizing: border-box; font-size: 17.500px; font-weight: 400; color: #111; display: flex; gap: 31px; height: 34px; width: 1676px; flex: none; line-height: 24px; }
  .info { width: 642px; height: 36px; box-sizing: border-box; border: solid #5c5c5c; border-width: 2px 2px 0; background: linear-gradient(#a9a9a9, #5e5e5e); display: flex; align-items: center; flex: none; }
  .search { width: 269px; height: 32px; flex: none; box-sizing: border-box; background: #747474; border: 2px solid #3c3c3c; padding: 1px 5px; font-style: italic; font-size: 16px; color: #cfcfcf; }
  .bino { margin-left: 6px; } .user { margin-left: 12px; }
  .name { margin-left: 8px; margin-top: 2px; }
  .name + :global(.caret) { margin-left: 61px; }
  .ex { margin-left: 14px; } .a360 { margin: 0 6px 0 10px; }
  .sep { width: 1px; height: 26px; background: #8a8a8a; margin-left: 15px; }
  .more { margin-left: 17px; }
  .winbtns { margin: 0 0 18px 87px; }

  .ribbontabs { height: 28px; flex: none; background: linear-gradient(#505050, #575757); display: flex; align-items: center; padding-left: 85px; border-bottom: 2px solid #5f9444; font-size: 17px; color: #dcdcdc; position: relative; }
  .rt { flex: none; padding-top: 4px; }
  .active { box-sizing: border-box; width: 117px; height: 26px; align-self: flex-end; margin-left: 17px; border: 1px solid #5f9444; border-bottom: 0; border-radius: 3px 3px 0 0; background: linear-gradient(#777, #5c5c5c); color: #fff; padding: 0 12px; line-height: 26px; }
  .toggle { margin-left: 36px; } .toggle + :global(.caret) { margin-left: 6px; }

  .ribbon { height: 146px; flex: none; box-sizing: border-box; border-left: 2px solid #5f9444; margin-left: 2px; padding-left: 1px; display: flex; gap: 3px; background: linear-gradient(#5c5c5c, #383838 84%, #5f9444 97%); border-bottom: 0; }
  .panel { display: flex; flex-direction: column; background: #5b5b5b; border-bottom: 2px solid #578a3e; box-sizing: border-box; flex: none; }
  .p-view { width: 186px; } .p-style { width: 304px; } .p-create { width: 184px; } .p-export { width: 181px; }
  .panel footer { height: 24px; background: linear-gradient(#5a5a5a, #303030 85%, #4c7a36); text-align: center; line-height: 27px; color: #f2f2f2; }
  .body { height: 120px; box-sizing: border-box; }
  .rows { display: flex; flex-direction: column; padding-top: 8px; }
  .cmd { height: 35.500px; display: flex; align-items: center; padding-left: 7px; gap: 6px; font-size: 17px; }
  .cmd > svg { width: 26px; }
  .cmd > span:last-child { margin-top: -3px; }
  .pair { width: 26px; height: 24px; position: relative; }
  .pair :global(svg + svg) { position: absolute; right: 0; bottom: 0; }
  .p-style .rows { padding: 9px 4px 0 2px; }
  .st { height: 34px; padding-left: 5px; flex: none; }
  .combo { height: 33px; flex: none; box-sizing: border-box; border: 2px solid #2c2c2c; background: linear-gradient(#505050, #656565); display: flex; align-items: center; padding: 0 1px 0 4px; margin-bottom: 3px; width: 300px; }
  .combo > :global(.caret) { margin-left: auto; width: 12px; height: 7px; }
  .bulb { margin: 0 8px 0 3px; }
  .swatch { width: 18px; height: 18px; border: 1.500px solid #111; background: #fac5e6; margin-right: 4px; }
  .big { display: flex; padding-top: 9px; }
  .tool { display: flex; flex-direction: column; align-items: center; }
  .pic { width: 48px; height: 50px; position: relative; margin-bottom: 6px; }
  .low { position: absolute; right: 1px; bottom: 1px; }
  .sdf { width: 40px; left: -3px; } .sdf .low { right: -4px; bottom: 14px; }
  .w1 { width: 74px; margin-left: 7px; } .w2 { width: 86px; margin-left: 9px; } .w3 { width: 51px; margin-left: 6px; } .w4 { width: 110px; margin-left: 9px; }

  .files { height: 37px; border-top: 2px solid #868686; border-bottom: 5px solid #5a5a5a; flex: none; position: relative; display: flex; align-items: center; }
  .fileshape, .shape { position: absolute; left: 0; top: 0; }
  .files span { position: relative; font-size: 16.500px; margin-top: 5px; }
  .f1 { margin-left: 48px; color: #bdbdbd; } .f2 { margin-left: 149px; color: #fff; }

  main { height: 1441px; flex: none; display: flex; background: #5a5a5a; }
  .view { width: 2356px; flex: none; background: #212830; position: relative; overflow: hidden; }
  .scan { position: absolute; left: 0; top: 0; }
  .pin { position: absolute; left: 779px; top: 799px; }
  .axis { font: 50px 'Open Sans', sans-serif; font-weight: 300; }
  .z { fill: #1464ff; } .y { fill: #0aa20a; font-size: 44px; } .x { fill: #e02020; font-size: 48px; }
  .vpbtns { position: absolute; right: 9px; top: 8px; }
  .cube { position: absolute; left: 2199px; top: 64px; }
  .compass { font: 700 28px 'Open Sans', sans-serif; fill: #a9acb0; }
  .faces { font: 700 23px 'Open Sans', sans-serif; fill: #50565e; }
  .wcs { font: 20px 'Open Sans', sans-serif; fill: #666b78; }
  .navbar { position: absolute; left: 2319px; top: 235px; }
  .command { position: absolute; left: 473px; top: 1399px; width: 1411px; height: 42px; display: flex; align-items: flex-end; }
  .grip { width: 81px; height: 40px; box-sizing: border-box; background: linear-gradient(#5f5f5f, #363636); border: 2px solid #5e6265; border-right: 0; border-radius: 5px 0 0 5px; overflow: hidden; flex: none; }
  .entry { flex: 1; height: 42px; box-sizing: border-box; border: 2px solid #65696c; border-radius: 3px; background: #bdbec0; display: flex; align-items: center; padding-left: 4px; }
  .entry span { font: italic 27px/30px 'DejaVu Sans Mono', monospace; font-size: 25.500px; color: #717477; margin: 3px 0 0 8px; }
  .up { margin-left: auto; margin-right: 4px; }

  aside { flex: 1; display: flex; background: #5b5b5b; padding-left: 2px; }
  .sidetabs { width: 35px; padding-top: 34px; flex: none; }
  .side { height: 176px; box-sizing: border-box; border: 1px solid #353535; border-left-width: 2px; border-radius: 5px 0 0 5px; background: #525252; display: flex; align-items: center; justify-content: center; color: #ababab; }
  .side.on { background: #5b5b5b; border-right: 0; color: #fff; }
  .side span { writing-mode: vertical-rl; transform: rotate(180deg); font-size: 18px; }
  .pane { flex: 1; display: flex; flex-direction: column; padding: 2px 11px 17px 11px; color: #111; }
  .pt { height: 30px; margin: 0 -11px 0 -11px; background: #515151; border-radius: 6px 6px 0 0; display: flex; align-items: center; color: #f2f2f2; padding: 3px 0 0 7px; box-sizing: border-box; font-size: 17px; }
  .pt i { width: 2px; height: 10px; border-left: 1px dotted #222; border-right: 1px dotted #222; margin: -8px 4px 0 0; }
  .dm { height: 28px; margin-top: 6px; display: flex; align-items: center; padding-left: 2px; gap: 2px; }
  .dm > span { margin-top: 4px; flex: none; }
  .select { flex: 1; height: 28px; box-sizing: border-box; border: 1px solid #8a8a8a; background: #e1e1e1; display: flex; align-items: center; justify-content: space-between; padding: 0 7px 0 4px; font-family: 'Liberation Sans', sans-serif; font-size: 16.500px; color: #000; }
  .tb { height: 54px; margin-top: 3px; box-sizing: border-box; border: 1px solid #858585; background: linear-gradient(#8a8a8a, #fff 7px); display: flex; padding: 8px 0 0 6px; font-size: 15.500px; }
  .ti { display: flex; flex-direction: column; align-items: center; flex: none; }
  .ti span { margin-top: 1px; line-height: 20px; }
  .t1 { width: 33px; } .t2 { width: 34px; margin-left: 11px; } .t3 { width: 39px; margin-left: 11px; } .t4 { width: 39px; margin-left: 10px; } .t5 { width: 39px; margin-left: 10px; }
  .off { color: #999; }
  .modes { height: 28px; margin-top: 10px; display: flex; align-items: center; font-size: 15.500px; }
  .groups { width: 83px; height: 28px; box-sizing: border-box; border: 1px solid #8fb4c8; background: linear-gradient(#1ba1e8, #8fd2f5); display: flex; align-items: center; gap: 7px; padding-left: 1px; flex: none; }
  .groups span { margin-top: 7px; }
  .modes > i { width: 1px; height: 24px; background: #777; margin: 0 10px 0 8px; }
  .modes > span { margin: 10px 0 0 8px; }
  .tree { flex: 1; margin-top: 8px; box-sizing: border-box; background: #fff; border: 1px solid #909090; padding: 3px 4px; color: #111; font-size: 16.500px; }
  .row { display: flex; align-items: center; height: 28px; position: relative; }
  .sel { background: #3399ff; height: 29px; color: #f2f8ff; padding-left: 33px; }
  .cb { width: 11px; height: 11px; border: 1px solid #1c4a80; background: linear-gradient(135deg, #e0e0dc, #fff); flex: none; margin-top: -2px; }
  .check { margin: -2px 0 0 -11px; position: relative; }
  .check path { fill: none; stroke: #16a016; stroke-width: 2; }
  .ic { margin-left: 34px; width: 16px; height: 16px; position: relative; margin-top: -4px; }
  .ic > :global(svg + svg) { position: absolute; right: 0; bottom: 0; }
  .sel em { margin-left: 29px; padding-top: 3px; }
  .base { padding-left: 12px; } .base .cb { margin-left: 9px; } .base em { margin-left: 74px; margin-top: 3px; }
  .def { padding-left: 55px; } .def b { width: 54px; height: 1px; background: #ddd; margin-left: 9px; } .def span { margin-left: 9px; margin-top: 3px; }

  .status { height: 44px; flex: none; box-sizing: border-box; border-top: 2px solid #5a5a5a; display: flex; justify-content: space-between; }
  .layouts { position: relative; height: 27px; display: flex; align-items: center; font-size: 16px; color: #b5bcc4; }
  .layouts > b, .layouts > span { position: relative; }
  .l1 { margin-left: 35px; color: #fff; } .l2 { margin-left: 34px; } .l3 { margin-left: 35px; }
  .boxes { display: flex; gap: 2px; height: 40px; background: #454545; font-size: 17px; color: #fff; }
  .sb { box-sizing: border-box; height: 40px; border: 2px solid #7a7a7a; background: #515151; display: flex; align-items: center; justify-content: space-between; flex: none; }
  .sb > :global(.caret) { width: 11px; height: 7px; }
  .glow { filter: drop-shadow(0 0 2px #0b62d6); }
  .b1 { width: 77px; } .b1 svg { margin-right: -3px; } .b2 { width: 83px; padding: 0 6px 0 2px; } .b3 { width: 131px; padding: 0 6px 0 4px; } .b4 { width: 168px; padding: 0 4px 0 6px; }
  .b5 { width: 76px; justify-content: center; } .b6 { width: 98px; padding: 0 6px 0 7px; } .b7 { width: 155px; padding: 0 6px 0 8px; margin-right: -2px; } .b8 { width: 97px; padding: 0 6px 0 4px; }
  .b9, .b11, .b12 { width: 40px; justify-content: center; } .b12 { width: 39px; } .b10 { width: 62px; padding: 0 7px 0 9px; } .b13 { width: 46px; justify-content: center; margin-left: -1px; } .b14 { width: 75px; padding: 0 5px 0 7px; }
</style>
